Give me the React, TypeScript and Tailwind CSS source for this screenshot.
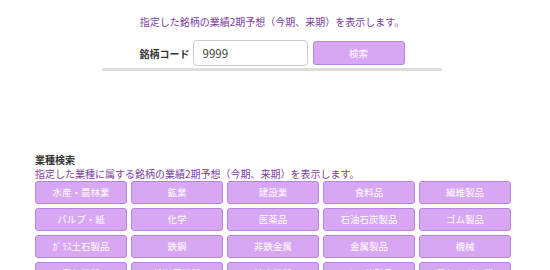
const industries = [
  '水産・農林業',
  '鉱業',
  '建設業',
  '食料品',
  '繊維製品',
  'パルプ・紙',
  '化学',
  '医薬品',
  '石油石炭製品',
  'ゴム製品',
  'ｶﾞﾗｽ土石製品',
  '鉄鋼',
  '非鉄金属',
  '金属製品',
  '機械',
  '電気機器',
  '輸送用機器',
  '精密機器',
  'その他製品',
  '電気・ガス業',
];

export default function App() {
  return (
    <div className="w-[550px] h-[270px] overflow-hidden bg-white font-['Noto_Sans_CJK_JP',sans-serif]">
      <div className="ml-[102px] w-[340px] border-b-[3px] border-[#dddddd] pb-[2px]">
        <p className="pt-[14px] text-center text-[10px] leading-[16px] text-[#7b3fa0]">
          指定した銘柄の業績2期予想（今期、来期）を表示します。
        </p>
        <div className="mt-[10px] flex items-center justify-center">
          <span className="mr-[3px] text-[10px] font-bold text-[#333333]">銘柄コード</span>
          <input
            defaultValue="9999"
            className="h-[26px] w-[115px] rounded-[4px] border border-[#cccccc] px-[9px] text-[11.5px] text-[#444444] outline-none"
          />
          <button className="ml-[5px] h-[24px] w-[92px] rounded-[3px] border border-[#b983e2] bg-[#d7a7f3] text-[9.5px] text-white">
            検索
          </button>
        </div>
      </div>

      <div className="mt-[82px] px-[35px]">
        <h2 className="text-[10px] font-bold leading-[14px] text-[#333333]">業種検索</h2>
        <p className="text-[10px] leading-[14px] text-[#7b3fa0]">
          指定した業種に属する銘柄の業績2期予想（今期、来期）を表示します。
        </p>
        <div className="grid w-[476px] grid-cols-5 gap-x-[4px] gap-y-[4px]">
          {industries.map((name) => (
            <button
              key={name}
              className="h-[23px] rounded-[3px] border border-[#b983e2] bg-[#d7a7f3] text-[9.5px] text-white"
            >
              {name}
            </button>
          ))}
        </div>
      </div>
    </div>
  );
}
